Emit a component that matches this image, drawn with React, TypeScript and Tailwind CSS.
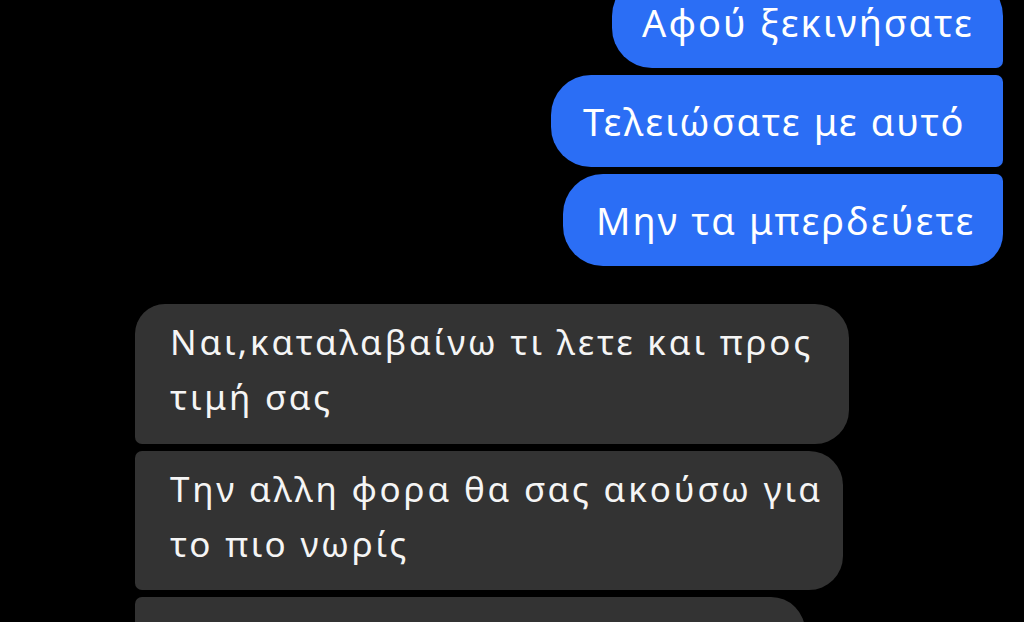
const font = { fontFamily: '"Noto Sans", Roboto, sans-serif' };

export default function App() {
  return (
    <div className="w-[1024px] h-[622px] overflow-hidden bg-black text-white" style={font}>
      {/* sent */}
      <div className="flex flex-col items-end pr-[21px] -mt-[24px] gap-[7px]">
        <div className="w-[391px] h-[92px] bg-[#2b6ef5] rounded-tl-[40px] rounded-bl-[40px] rounded-tr-[40px] rounded-br-[7px] flex items-center pl-[30px] text-[38px] tracking-[2.1px] leading-none">
          Αφού ξεκινήσατε
        </div>
        <div className="w-[452px] h-[92px] bg-[#2b6ef5] rounded-l-[40px] rounded-r-[7px] flex items-center pl-[32px] text-[38px] tracking-[2.1px] leading-none">
          Τελειώσατε με αυτό
        </div>
        <div className="w-[440px] h-[92px] bg-[#2b6ef5] rounded-l-[40px] rounded-tr-[7px] rounded-br-[32px] flex items-center pl-[33px] text-[38px] tracking-[2.1px] leading-none">
          Μην τα μπερδεύετε
        </div>
      </div>

      {/* received */}
      <div className="flex flex-col items-start pl-[135px] mt-[38px] gap-[7px]">
        <div className="w-[714px] h-[140px] bg-[#333333] rounded-tl-[30px] rounded-r-[34px] rounded-bl-[7px] pl-[35px] pr-[20px] pt-[10px] text-[35px] tracking-[2.8px] leading-[55px] text-[#f5f5f5]">
          Ναι,καταλαβαίνω τι λετε και προς τιμή σας
        </div>
        <div className="w-[708px] h-[139px] bg-[#333333] rounded-l-[7px] rounded-r-[34px] pl-[35px] pr-[20px] pt-[10px] text-[35px] tracking-[2.8px] leading-[55px] text-[#f5f5f5]">
          Την αλλη φορα θα σας ακούσω για το πιο νωρίς
        </div>
        <div className="w-[670px] h-[140px] bg-[#333333] rounded-tl-[7px] rounded-r-[34px]"></div>
      </div>
    </div>
  );
}
